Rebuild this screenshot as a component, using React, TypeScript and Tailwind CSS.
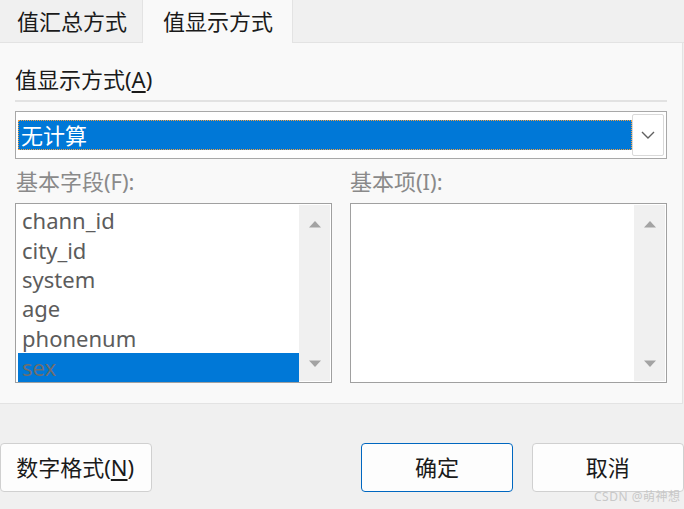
const font = { fontFamily: '"Noto Sans", "Noto Sans CJK SC", sans-serif' };

const fields = ['chann_id', 'city_id', 'system', 'age', 'phonenum', 'sex'];

const ScrollBar = () => (
	<div className="w-[31px] h-full bg-[#f0f0f0] flex flex-col items-center justify-between pt-[15px] pb-[13px]">
		<svg width="14" height="8" viewBox="0 0 14 8">
			<path d="M1 7.5 L7 1 L13 7.5 Z" fill="#a3a3a3" />
		</svg>
		<svg width="14" height="8" viewBox="0 0 14 8">
			<path d="M1 0.5 L7 7 L13 0.5 Z" fill="#a3a3a3" />
		</svg>
	</div>
);

const App = () => {
	return (
		<div
			className="relative w-[684px] h-[509px] overflow-hidden bg-[#f0f0f0] text-[22px] text-[#1a1a1a]"
			style={font}>
			{/* tabs */}
			<div className="flex h-[43px]">
				<div className="w-[143px] h-full border-r border-b border-[#e3e3e3] flex items-center pl-[17px]">
					值汇总方式
				</div>
				<div className="w-[149px] h-full bg-[#f9f9f9] flex items-center pl-[20px]">值显示方式</div>
				<div className="flex-1 h-full border-l border-b border-[#e3e3e3]" />
			</div>

			{/* panel */}
			<div className="w-[683px] h-[361px] bg-[#f9f9f9] border-r border-b border-[#e3e3e3] pl-[15px] pr-[15px]">
				<div className="h-[57px] flex items-center pt-[16px]">
					值显示方式(<span className="underline underline-offset-[3px]">A</span>)
				</div>
				<div className="h-[2px] w-[652px] bg-[#e2e2e2]" />
				<div className="mt-[9px] w-[652px] h-[48px] border border-[#a8a8a8] bg-white flex items-center pl-[2px] pr-[2px]">
					<div className="flex-1 h-[30px] bg-[#0078d7] border border-dotted border-[#f5a040] text-white flex items-center pl-[2px]">
						无计算
					</div>
					<div className="w-[32px] h-[42px] border border-[#d9d9d9] rounded-[2px] bg-white flex items-center justify-center">
						<svg width="14" height="8" viewBox="0 0 14 8">
							<path d="M1 1 L7 7 L13 1" fill="none" stroke="#606060" strokeWidth="1.4" />
						</svg>
					</div>
				</div>

				<div className="flex gap-[18px] mt-[0px]">
					<div className="w-[317px]">
						<div className="h-[44px] flex items-center pl-[1px] text-[#8a8a8a]">基本字段(F):</div>
						<div className="h-[180px] border border-[#a0a0a0] bg-white flex pl-[2px] pr-[1px] py-[1px]">
							<div className="flex-1 flex flex-col pt-[1px] text-[#5c5c5c]">
								{fields.map((f) => (
									<div
										key={f}
										className={`h-[29.4px] flex items-center pl-[4px] ${
											f === 'sex' ? 'bg-[#0078d7] text-[#6e6e6e]' : ''
										}`}>
										{f}
									</div>
								))}
							</div>
							<ScrollBar />
						</div>
					</div>
					<div className="w-[317px]">
						<div className="h-[44px] flex items-center text-[#8a8a8a]">基本项(I):</div>
						<div className="h-[180px] border border-[#a0a0a0] bg-white flex pl-[2px] pr-[1px] py-[1px]">
							<div className="flex-1" />
							<ScrollBar />
						</div>
					</div>
				</div>
			</div>

			{/* buttons */}
			<div className="flex mt-[39px] h-[49px]">
				<button className="w-[153px] h-full bg-[#fdfdfd] border border-[#d0d0d0] rounded-[4px] flex items-center justify-center pr-[2px]">
					数字格式(<span className="underline underline-offset-[3px]">N</span>)
				</button>
				<button className="ml-[209px] w-[152px] h-full bg-[#fdfdfd] border-[1.5px] border-[#0067c0] rounded-[4px] flex items-center justify-center">
					确定
				</button>
				<button className="ml-[19px] w-[153px] h-full bg-[#fdfdfd] border border-[#d0d0d0] rounded-[4px] flex items-center justify-center">
					取消
				</button>
			</div>

			<div className="absolute left-[594px] top-[488px] text-[12px] text-[#c8c8c8] tracking-[0.5px]">
				CSDN @萌神想
			</div>
		</div>
	);
};

export default App;
